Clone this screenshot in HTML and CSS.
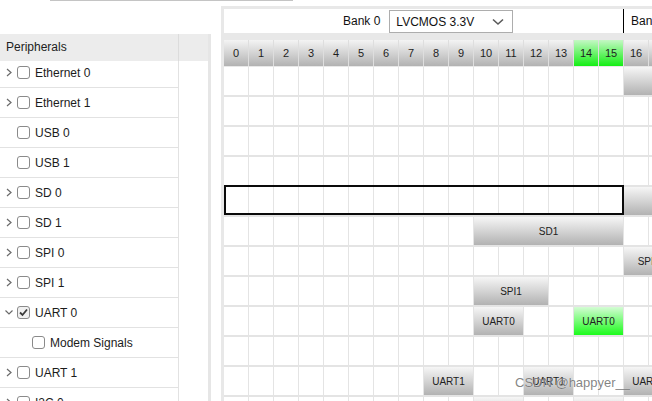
FILE: index.html
```html
<!DOCTYPE html>
<html>
<head>
<meta charset="utf-8">
<link rel="stylesheet" href="styles.css">
</head>
<body>
<div class="topline"></div>
<div class="main">
  <div class="side">
    <div class="side-head">
      <div class="side-title">Peripherals</div>
      <div class="side-extra"></div>
    </div>
    <div class="side-list">
      <div class="side-rows">
        <div class="prow"><div class="pcell"><span class="chev"><svg width="8" height="9" viewBox="0 0 8 9"><path d="M2 1 L6 4.5 L2 8" fill="none" stroke="#6a6a6a" stroke-width="1.2"/></svg></span><span class="cb"></span><span class="plabel">Ethernet 0</span></div><div class="pextra"></div></div>
        <div class="prow"><div class="pcell"><span class="chev"><svg width="8" height="9" viewBox="0 0 8 9"><path d="M2 1 L6 4.5 L2 8" fill="none" stroke="#6a6a6a" stroke-width="1.2"/></svg></span><span class="cb"></span><span class="plabel">Ethernet 1</span></div><div class="pextra"></div></div>
        <div class="prow"><div class="pcell"><span class="chev"></span><span class="cb"></span><span class="plabel">USB 0</span></div><div class="pextra"></div></div>
        <div class="prow"><div class="pcell"><span class="chev"></span><span class="cb"></span><span class="plabel">USB 1</span></div><div class="pextra"></div></div>
        <div class="prow"><div class="pcell"><span class="chev"><svg width="8" height="9" viewBox="0 0 8 9"><path d="M2 1 L6 4.5 L2 8" fill="none" stroke="#6a6a6a" stroke-width="1.2"/></svg></span><span class="cb"></span><span class="plabel">SD 0</span></div><div class="pextra"></div></div>
        <div class="prow"><div class="pcell"><span class="chev"><svg width="8" height="9" viewBox="0 0 8 9"><path d="M2 1 L6 4.5 L2 8" fill="none" stroke="#6a6a6a" stroke-width="1.2"/></svg></span><span class="cb"></span><span class="plabel">SD 1</span></div><div class="pextra"></div></div>
        <div class="prow"><div class="pcell"><span class="chev"><svg width="8" height="9" viewBox="0 0 8 9"><path d="M2 1 L6 4.5 L2 8" fill="none" stroke="#6a6a6a" stroke-width="1.2"/></svg></span><span class="cb"></span><span class="plabel">SPI 0</span></div><div class="pextra"></div></div>
        <div class="prow"><div class="pcell"><span class="chev"><svg width="8" height="9" viewBox="0 0 8 9"><path d="M2 1 L6 4.5 L2 8" fill="none" stroke="#6a6a6a" stroke-width="1.2"/></svg></span><span class="cb"></span><span class="plabel">SPI 1</span></div><div class="pextra"></div></div>
        <div class="prow"><div class="pcell"><span class="chev"><svg width="8" height="9" viewBox="0 0 8 9"><path d="M0.5 2.5 L4 6 L7.5 2.5" fill="none" stroke="#6a6a6a" stroke-width="1.2"/></svg></span><span class="cb cb-on"><svg width="11" height="11" viewBox="0 0 11 11"><path d="M2 5.5 L4.5 8 L9 2.5" fill="none" stroke="#3a3a3a" stroke-width="1.8"/></svg></span><span class="plabel">UART 0</span></div><div class="pextra"></div></div>
        <div class="prow"><div class="pcell pcell-sub"><span class="cb"></span><span class="plabel">Modem Signals</span></div><div class="pextra"></div></div>
        <div class="prow"><div class="pcell"><span class="chev"><svg width="8" height="9" viewBox="0 0 8 9"><path d="M2 1 L6 4.5 L2 8" fill="none" stroke="#6a6a6a" stroke-width="1.2"/></svg></span><span class="cb"></span><span class="plabel">UART 1</span></div><div class="pextra"></div></div>
        <div class="prow"><div class="pcell"><span class="chev"><svg width="8" height="9" viewBox="0 0 8 9"><path d="M2 1 L6 4.5 L2 8" fill="none" stroke="#6a6a6a" stroke-width="1.2"/></svg></span><span class="cb"></span><span class="plabel">I2C 0</span></div><div class="pextra"></div></div>
      </div>
    </div>
  </div>

  <div class="pins">
    <div class="banks">
      <div class="bank bank-first">
        <span class="bank-label">Bank 0</span>
        <div class="select"><span class="select-text">LVCMOS 3.3V</span><svg class="select-arrow" width="12" height="8" viewBox="0 0 12 8"><path d="M1 1.5 L6 6 L11 1.5" fill="none" stroke="#5a5a5a" stroke-width="1.6"/></svg></div>
      </div>
      <div class="bank bank-next"><span class="bank-label">Bank 1</span></div>
    </div>

    <div class="colhead">
      <div class="ch">0</div><div class="ch">1</div><div class="ch">2</div><div class="ch">3</div><div class="ch">4</div><div class="ch">5</div><div class="ch">6</div><div class="ch">7</div><div class="ch">8</div><div class="ch">9</div><div class="ch">10</div><div class="ch">11</div><div class="ch">12</div><div class="ch">13</div><div class="ch ch-on">14</div><div class="ch ch-on">15</div><div class="ch">16</div><div class="ch">17</div><div class="ch">18</div><div class="ch">19</div>
    </div>

    <div class="grid">
      <div class="grow"><div class="blk at16 sp4"></div></div>
      <div class="grow"></div>
      <div class="grow"></div>
      <div class="grow"></div>
      <div class="grow"><div class="selbox at0 sp16"></div><div class="blk at16 sp4"></div></div>
      <div class="grow"><div class="blk at10 sp6">SD1</div></div>
      <div class="grow"><div class="blk at16 sp2">SPI0</div></div>
      <div class="grow"><div class="blk at10 sp3">SPI1</div></div>
      <div class="grow"><div class="blk at10 sp2">UART0</div><div class="blk blk-on at14 sp2">UART0</div></div>
      <div class="grow"></div>
      <div class="grow"><div class="blk at8 sp2">UART1</div><div class="blk at12 sp2">UART1</div><div class="blk at16 sp2">UART1</div></div>
      <div class="grow"><div class="blk at10 sp2">I2C0</div><div class="blk at14 sp2">I2C0</div></div>
    </div>
  </div>
</div>
<div class="watermark">CSDN @happyer__</div>
</body>
</html>
```

FILE: styles.css
```css
html, body {
  margin: 0;
  padding: 0;
  background: #ffffff;
  overflow: hidden;
  height: 401px;
  font-family: "Liberation Sans", Arial, sans-serif;
  color: #1c1c1c;
}

.topline {
  height: 1px;
  width: 243px;
  margin-left: 50px;
  background: #c4c4c4;
}

.main {
  display: flex;
  align-items: flex-start;
}

/* ---------- left panel ---------- */
.side {
  flex: 0 0 auto;
  width: 211px;
  box-sizing: border-box;
  margin-top: 33px;
  border-right: 3px solid #e6e6e6;
  height: 368px;
  display: flex;
  flex-direction: column;
}

.side-head {
  display: flex;
  height: 27px;
  background: #ececec;
  flex: 0 0 auto;
  position: relative;
  z-index: 1;
}

.side-title {
  width: 179px;
  box-sizing: border-box;
  border-right: 1px solid #dcdcdc;
  padding-left: 6px;
  font-size: 12px;
  line-height: 27px;
  color: #222;
}

.side-extra {
  flex: 1;
}

.side-list {
  flex: 1;
  overflow: hidden;
}

.side-rows {
  margin-top: -3px;
}

.prow {
  display: flex;
  height: 30px;
}

.pcell {
  width: 179px;
  box-sizing: border-box;
  border-right: 1px solid #e2e2e2;
  border-bottom: 1px solid #e2e2e2;
  display: flex;
  align-items: center;
  padding-left: 5px;
}

.pcell-sub {
  padding-left: 32px;
}

.pextra {
  flex: 1;
}

.chev {
  width: 8px;
  height: 9px;
  margin-right: 4px;
  display: flex;
  align-items: center;
}

.cb {
  width: 13px;
  height: 13px;
  box-sizing: border-box;
  border: 1px solid #8a8a8a;
  border-radius: 3px;
  background: #fff;
  margin-right: 5px;
  display: flex;
  align-items: center;
  justify-content: center;
  flex: 0 0 auto;
}

.cb-on {
  background: #f0f0f0;
}

.plabel {
  font-size: 12px;
  color: #1c1c1c;
  white-space: nowrap;
}

/* ---------- right panel ---------- */
.pins {
  flex: 1;
  min-width: 0;
  margin-left: 10px;
  margin-top: 5px;
  background: #e8e8e8;
  padding: 3px 0 0 3px;
  height: 392px;
  overflow: hidden;
}

.banks {
  display: flex;
  height: 24px;
  background: #fff;
  margin-bottom: 7px;
  width: 600px;
}

.bank {
  display: flex;
  align-items: center;
  flex: 0 0 auto;
  box-sizing: border-box;
}

.bank-first {
  width: 399px;
  padding-left: 119px;
}

.bank-next {
  border-left: 1px solid #000;
  padding-left: 7px;
  width: 200px;
}

.bank-label {
  font-size: 12px;
  color: #111;
  white-space: nowrap;
}

.select {
  margin-left: 9px;
  width: 124px;
  height: 23px;
  margin-top: 1px;
  box-sizing: border-box;
  border: 1px solid #adadad;
  background: #fff;
  display: flex;
  align-items: center;
  padding-left: 6px;
}

.select-text {
  font-size: 12px;
  color: #111;
  flex: 1;
}

.select-arrow {
  margin-right: 8px;
  margin-top: 1px;
}

.colhead {
  display: grid;
  grid-template-columns: repeat(20, 24px);
  column-gap: 1px;
  height: 26px;
  background: #dedede;
  margin-bottom: 1px;
  width: 499px;
}

.ch {
  background: linear-gradient(#f4f4f4, #b2b2b2);
  font-size: 11px;
  color: #1e1e1e;
  display: flex;
  align-items: center;
  justify-content: center;
}

.ch-on {
  background: linear-gradient(#c4f8c4, #14ee14);
}

.grid {
  display: flex;
  flex-direction: column;
  row-gap: 2px;
  background: #e4e4e4;
  width: 499px;
}

.grow {
  display: grid;
  grid-template-columns: repeat(20, 24px);
  grid-template-rows: 28px;
  column-gap: 1px;
  height: 28px;
  background: repeating-linear-gradient(90deg, #ffffff 0 24px, #e4e4e4 24px 25px);
}

.blk {
  grid-row: 1;
  background: linear-gradient(#f6f6f6, #b2b2b2);
  font-size: 10px;
  color: #202020;
  display: flex;
  align-items: center;
  justify-content: center;
  white-space: nowrap;
}

.blk-on {
  background: linear-gradient(#d4fcd4, #1cfb1c);
}

.selbox {
  grid-row: 1;
  margin-top: -2px;
  margin-right: -1px;
  border: 2px solid #0a0a0a;
  box-sizing: border-box;
  z-index: 1;
}

.at0 { grid-column-start: 1; }
.at8 { grid-column-start: 9; }
.at10 { grid-column-start: 11; }
.at12 { grid-column-start: 13; }
.at14 { grid-column-start: 15; }
.at16 { grid-column-start: 17; }

.sp2 { grid-column-end: span 2; }
.sp3 { grid-column-end: span 3; }
.sp4 { grid-column-end: span 4; }
.sp6 { grid-column-end: span 6; }
.sp16 { grid-column-end: span 16; }

.watermark {
  position: absolute;
  left: 515px;
  top: 375px;
  font-size: 13px;
  color: rgba(90, 90, 90, 0.75);
  text-shadow: 0 0 1px rgba(255, 255, 255, 0.8);
  white-space: nowrap;
}
```
